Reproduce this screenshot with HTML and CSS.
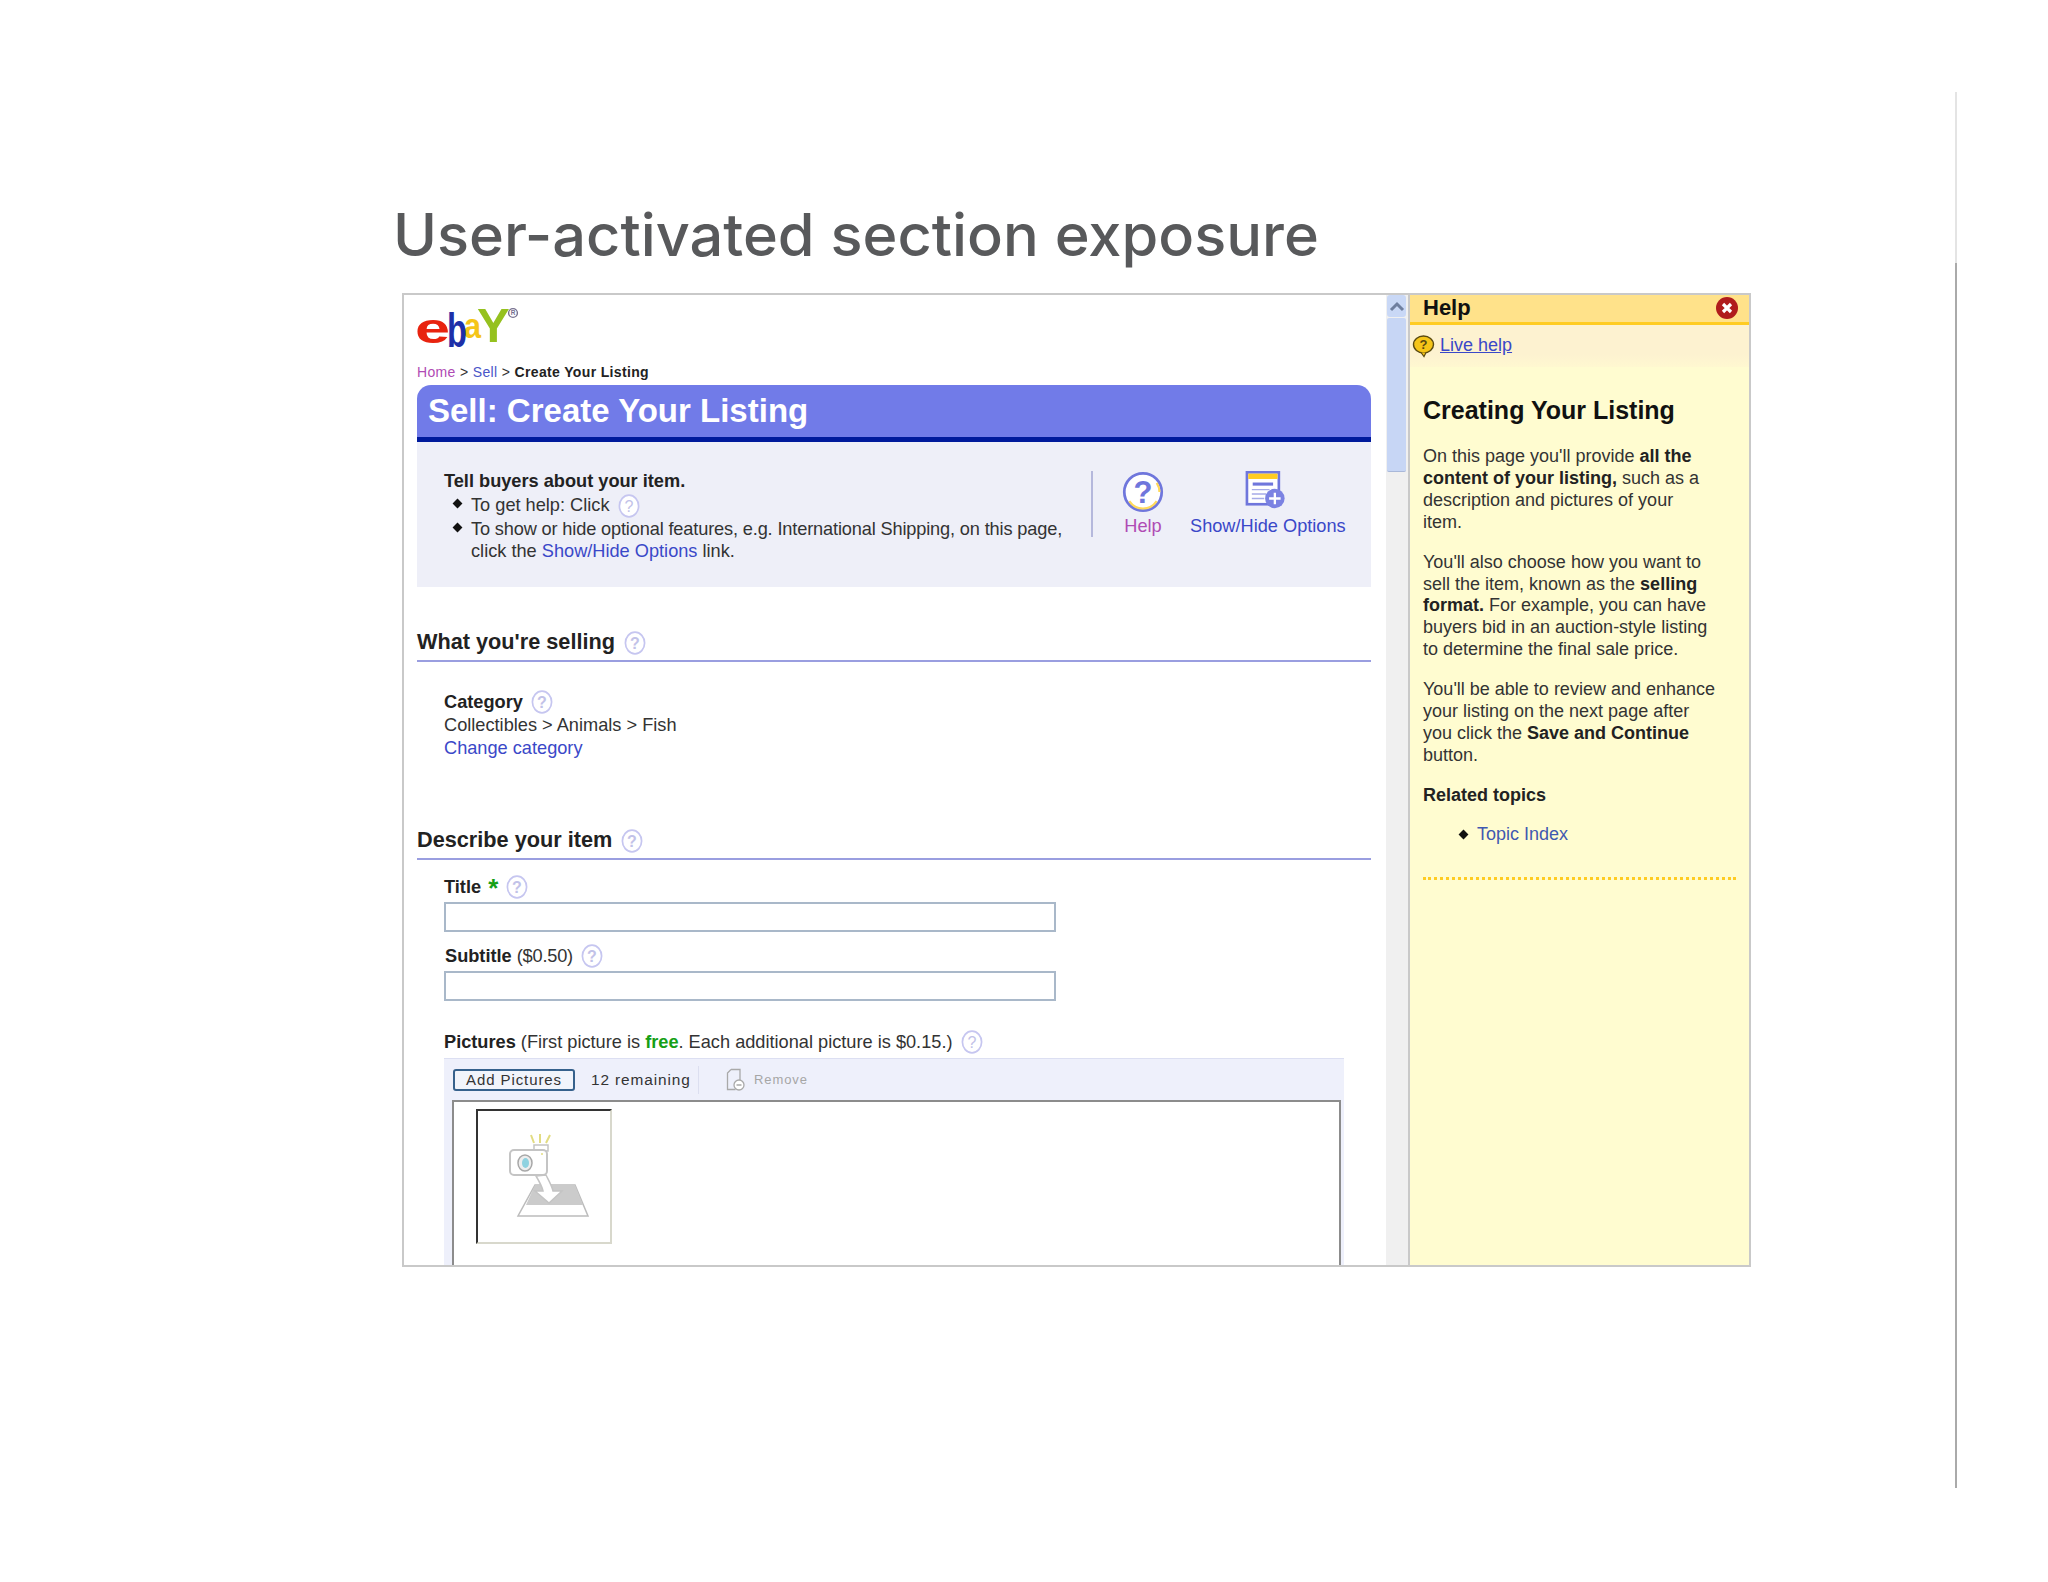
FILE: index.html
```html
<!DOCTYPE html>
<html>

<head>
  <meta charset="utf-8" />
  <title>User-activated section exposure</title>
  <link rel="stylesheet" href="styles.css">
</head>

<body>
  <svg class="defs" width="0" height="0">
    <symbol id="q" viewBox="0 0 22 24">
      <ellipse cx="11" cy="12" rx="9.6" ry="10.8" fill="#fff" stroke="#c6c6f0" stroke-width="1.7" />
      <text x="11" y="18" text-anchor="middle" font-family="Liberation Sans" font-size="16" fill="#c2c2e8">?</text>
    </symbol>
  </svg>
  <div class="slide">
    <h1 class="slide-title">User-activated section exposure</h1>
    <div class="shot">
      <div class="page">
        <div class="content">
          <svg class="logo" width="112" height="50" viewBox="0 0 112 50">
            <text transform="translate(-2 38) scale(1.5 1)" class="logo-e">e</text>
            <text transform="translate(60 37)" class="logo-y">Y</text>
            <text transform="translate(47 33) scale(.85 1)" class="logo-a">a</text>
            <text transform="translate(30 42) scale(.68 1)" class="logo-b">b</text>
            <circle cx="96" cy="8" r="4.4" fill="none" stroke="#76708f" stroke-width="1.4" />
            <text x="96" y="10.3" text-anchor="middle" class="logo-r">R</text>
          </svg>
          <div class="crumbs"><a class="visited">Home</a> &gt; <a>Sell</a> &gt; <b>Create Your Listing</b></div>
          <div class="banner">Sell: Create Your Listing</div>
          <div class="intro">
            <div class="intro-text">
              <b>Tell buyers about your item.</b>
              <ul class="intro-list">
                <li>To get help: Click <svg class="q q-inline"><use href="#q" /></svg></li>
                <li><span class="tight">To show or hide optional features, e.g. International Shipping, on this page,</span><br>click the <a>Show/Hide Options</a> link.</li>
              </ul>
            </div>
            <div class="intro-actions">
              <div class="action action-help">
                <svg width="46" height="46" viewBox="0 0 46 46">
                  <circle cx="23" cy="23" r="20.5" fill="#fff" stroke="#6f76dc" stroke-width="3" />
                  <path d="M8 33a18 18 0 0 0 30 0M38 13a18 18 0 0 1 3 10" fill="none" stroke="#ffd95a" stroke-width="2.4" />
                  <text x="23" y="35" text-anchor="middle" class="help-mark">?</text>
                </svg>
                <a class="visited">Help</a>
              </div>
              <div class="action action-show">
                <svg width="46" height="44" viewBox="0 0 46 44">
                  <rect x="1.5" y="1.5" width="36" height="36" fill="#fff" stroke="#6f76dc" stroke-width="3" />
                  <rect x="3" y="3" width="33" height="6" fill="#ffcc22" />
                  <rect x="8" y="13" width="23" height="3.5" fill="#6f76dc" />
                  <path d="M7 21h20M7 26h16M7 31h14" stroke="#a6abe8" stroke-width="1.6" />
                  <circle cx="33" cy="31" r="11" fill="#7b82e2" />
                  <path d="M33 24.5v13M26.5 31h13" stroke="#fff" stroke-width="2.6" />
                </svg>
                <a>Show/Hide Options</a>
              </div>
            </div>
          </div>

          <h2 class="section-head first">What you're selling <svg class="q"><use href="#q" /></svg></h2>
          <div class="section-body category">
            <div class="label">Category <svg class="q"><use href="#q" /></svg></div>
            <div>Collectibles &gt; Animals &gt; Fish</div>
            <a class="change">Change category</a>
          </div>

          <h2 class="section-head second">Describe your item <svg class="q"><use href="#q" /></svg></h2>
          <div class="section-body">
            <div class="label field-label">Title <span class="star">*</span> <svg class="q"><use href="#q" /></svg></div>
            <div class="input"></div>
            <div class="label field-label sub"><span class="nudge">Subtitle</span> <span class="normal">($0.50)</span> <svg class="q"><use href="#q" /></svg></div>
            <div class="input"></div>
            <div class="pics-label"><span class="label">Pictures</span> (First picture is <span class="free">free</span>. Each additional picture is $0.15.) <svg class="q"><use href="#q" /></svg></div>
            <div class="uploader">
              <div class="toolbar">
                <span class="add-btn">Add Pictures</span>
                <span class="remaining">12 remaining</span>
                <svg class="remove-icon" width="20" height="24" viewBox="0 0 20 24">
                  <path d="M5 1.5h9v11M5 1.5L1.5 5v16.5h8" fill="none" stroke="#a9a9a9" stroke-width="1.3" />
                  <circle cx="13" cy="17" r="5" fill="#fff" stroke="#a9a9a9" stroke-width="1.3" />
                  <path d="M10.5 17h5" stroke="#a9a9a9" stroke-width="1.5" />
                </svg>
                <span class="remove">Remove</span>
              </div>
              <div class="dropzone">
                <div class="thumb">
                  <svg width="90" height="92" viewBox="0 0 90 92">
                    <path d="M25 5l3 8M34 4v9M44 5l-4 8" stroke="#e2dc82" stroke-width="2" />
                    <rect x="28" y="15" width="14" height="6" fill="#fff" stroke="#c4c4c4" stroke-width="1.5" />
                    <rect x="4" y="20" width="37" height="25" rx="4" fill="#fff" stroke="#c4c4c4" stroke-width="2" />
                    <ellipse cx="19" cy="33" rx="7" ry="8" fill="#eee" stroke="#a8a8a8" stroke-width="1.5" />
                    <ellipse cx="19.5" cy="33" rx="3.5" ry="5" fill="#8fd2e0" />
                    <circle cx="36" cy="24" r="1" fill="#e2dc82" />
                    <path d="M29 55h40l13 31H12z" fill="#fff" stroke="#bcbcbc" stroke-width="1.5" />
                    <path d="M29 55h40l8 20H20z" fill="#cbcbcb" />
                    <path d="M30 46l10-1c3 6 6 11 7 16h9L43 73 29 61h8c-1-5-4-10-7-15z" fill="#fff" stroke="#c4c4c4" stroke-width="1.5" />
                  </svg>
                </div>
              </div>
            </div>
          </div>
        </div>
        <div class="scrollbar">
          <div class="scroll-btn">
            <svg width="16" height="12" viewBox="0 0 16 12"><path d="M2 10l6-6 6 6" fill="none" stroke="#6f7f9f" stroke-width="3" /></svg>
          </div>
          <div class="scroll-thumb"></div>
        </div>
      </div>

      <div class="help">
        <div class="help-head">
          <span>Help</span>
          <svg width="24" height="24" viewBox="0 0 24 24">
            <circle cx="12" cy="12" r="11" fill="#b01c1c" />
            <path d="M8 8l8 8M16 8l-8 8" stroke="#fff" stroke-width="3.2" />
          </svg>
        </div>
        <div class="help-live">
          <svg width="23" height="24" viewBox="0 0 23 24">
            <ellipse cx="11.5" cy="10.5" rx="10" ry="8.5" fill="#f5c518" stroke="#5a4a10" stroke-width="1.4" />
            <path d="M9 18.5l3 4 2-4" fill="#f5c518" stroke="#5a4a10" stroke-width="1.2" />
            <text x="11.5" y="15" text-anchor="middle" class="live-mark">?</text>
          </svg>
          <a>Live help</a>
        </div>
        <div class="help-body">
          <h3 class="help-title">Creating Your Listing</h3>
          <p>On this page you'll provide <b>all the<br>content of your listing,</b> such as a<br>description and pictures of your<br>item.</p>
          <p>You'll also choose how you want to<br>sell the item, known as the <b>selling<br>format.</b> For example, you can have<br>buyers bid in an auction-style listing<br>to determine the final sale price.</p>
          <p>You'll be able to review and enhance<br>your listing on the next page after<br>you click the <b>Save and Continue</b><br>button.</p>
          <p class="related"><b>Related topics</b></p>
          <ul class="topics">
            <li><a>Topic Index</a></li>
          </ul>
          <div class="dots"></div>
        </div>
      </div>
    </div>
  </div>
  <div class="edge"></div>
</body>

</html>
```

FILE: styles.css
```css
html,
body {
  margin: 0;
  padding: 0;
}

body {
  display: flex;
  height: 1582px;
  overflow: hidden;
  background: #fff;
  color: #333;
  font-family: "Liberation Sans", Arial, sans-serif;
  font-size: 18.2px;
  line-height: 22px;
}

a {
  color: #3a48c8;
}

.defs {
  display: block;
  width: 0;
  height: 0;
}

.slide {
  width: 1955px;
  padding: 196px 0 0 393px;
  box-sizing: border-box;
}

.edge {
  width: 2px;
  height: 1396px;
  margin-top: 92px;
  background: linear-gradient(#e4e4e4 0, #e4e4e4 171px, #aaa 171px);
}

.slide-title {
  margin: 0 0 20px;
  height: 77px;
  font-family: "Inter", sans-serif;
  font-size: 59.5px;
  font-weight: 500;
  line-height: 77px;
  color: #58595b;
  white-space: nowrap;
}

.shot {
  display: flex;
  width: 1349px;
  height: 974px;
  margin-left: 9px;
  box-sizing: border-box;
  border: 2px solid #c9c9c9;
  overflow: hidden;
}

.page {
  display: flex;
  width: 1004px;
  flex-shrink: 0;
  background: #fff;
}

/* left side */
.content {
  width: 982px;
  padding: 10px 0 0 13px;
  box-sizing: border-box;
  overflow: hidden;
}

.logo {
  display: block;
  height: 50px;
}

.logo text {
  font-family: "Liberation Sans", sans-serif;
  font-weight: 700;
}

.logo-e {
  font-size: 42px;
  fill: #e8230f;
}

.logo-b {
  font-size: 48px;
  fill: #1d2fa8;
}

.logo-a {
  font-size: 36px;
  fill: #f5c518;
}

.logo-y {
  font-size: 49px;
  fill: #95c11f;
}

.logo-r {
  font-size: 6.5px;
  fill: #76708f;
}

.crumbs {
  margin-top: 8px;
  height: 18px;
  font-size: 14px;
  line-height: 18px;
  letter-spacing: 0.35px;
}

.crumbs a {
  color: #4a55c8;
}

.crumbs b {
  color: #222;
}

a.visited,
.crumbs a.visited {
  color: #b04bb4;
}

.banner {
  width: 954px;
  height: 57px;
  margin-top: 4px;
  padding-left: 11px;
  box-sizing: border-box;
  border-bottom: 5px solid #001a9c;
  border-radius: 14px 14px 0 0;
  background: #717be8;
  color: #fff;
  font-size: 33px;
  font-weight: 700;
  line-height: 52px;
}

.intro {
  display: flex;
  width: 954px;
  height: 145px;
  padding: 28px 0 0 27px;
  box-sizing: border-box;
  background: #eeeff8;
}

.intro-text {
  width: 647px;
}

.intro-text b {
  color: #222;
  display: block;
  line-height: 22px;
}

.intro-list {
  margin: 2px 0 0;
  padding: 0 0 0 27px;
  list-style: none;
  line-height: 22.2px;
}

.intro-list li {
  position: relative;
}

.tight {
  letter-spacing: -0.15px;
}

.intro-list li::before,
.topics li::before {
  content: "";
  position: absolute;
  left: -17px;
  top: 6px;
  width: 7px;
  height: 7px;
  background: #111;
  transform: rotate(45deg);
}

.intro-actions {
  display: flex;
  height: 66px;
  margin-top: 1px;
  padding-left: 27px;
  border-left: 2px solid #b5b8dc;
  gap: 24px;
}

.action {
  display: flex;
  flex-direction: column;
  align-items: center;
}

.action svg {
  display: block;
}

.action a {
  margin-top: 2px;
  white-space: nowrap;
}

.action-show svg {
  margin-left: -3px;
  margin-bottom: 3px;
}

.help-mark {
  font-family: "Liberation Sans", sans-serif;
  font-size: 34px;
  font-weight: 700;
  fill: #6f76dc;
}

.q {
  display: inline-block;
  width: 22px;
  height: 24px;
  vertical-align: -6px;
  margin-left: 3px;
}

.q-inline {
  vertical-align: -7px;
}

.section-head {
  width: 954px;
  height: 40px;
  margin: 0;
  box-sizing: border-box;
  border-bottom: 2px solid #9a9ee0;
  color: #222;
  font-size: 21.7px;
  font-weight: 700;
  line-height: 39px;
}

.section-head.first {
  margin-top: 35px;
}

.section-head.second {
  margin-top: 61px;
}

.section-body {
  padding-left: 27px;
}

.category {
  padding-top: 28px;
}

.change {
  display: block;
  margin-top: 1px;
}

.label {
  color: #222;
  font-weight: 700;
}

.field-label {
  height: 22px;
}

.section-body .field-label:first-child {
  margin-top: 15px;
}

.field-label.sub {
  margin-top: 12px;
}

.nudge {
  margin-left: 1px;
}

.normal {
  font-weight: 400;
  color: #333;
  letter-spacing: -0.2px;
}

.star {
  margin-left: 2px;
  color: #16a016;
  font-size: 26px;
  line-height: 0;
  vertical-align: -4px;
}

.input {
  width: 612px;
  height: 30px;
  margin-top: 5px;
  box-sizing: border-box;
  border: 2px solid #a9b8c9;
  background: #fff;
}

.pics-label {
  height: 22px;
  margin-top: 29px;
}

.free {
  color: #16a016;
  font-weight: 700;
}

.uploader {
  width: 900px;
  height: 220px;
  margin-top: 6px;
  padding: 10px 3px 0 9px;
  box-sizing: border-box;
  background: #eef0fb;
  border-top: 1px solid #dcdff2;
}

.toolbar {
  display: flex;
  align-items: center;
  height: 22px;
  margin-bottom: 9px;
  font-size: 15.4px;
  letter-spacing: 0.9px;
}

.add-btn {
  width: 122px;
  height: 22px;
  box-sizing: border-box;
  border: 2px solid #36618c;
  border-radius: 3px;
  background: #f1f4fb;
  color: #333;
  font-size: 15px;
  line-height: 18px;
  text-align: center;
}

.remaining {
  width: 107px;
  height: 28px;
  margin-left: 16px;
  border-right: 1px solid #dcdff0;
  line-height: 28px;
  white-space: nowrap;
}

.remove-icon {
  margin-left: 27px;
}

.remove {
  margin-left: 8px;
  color: #a6a6a6;
  font-size: 13px;
}

.dropzone {
  width: 889px;
  height: 170px;
  margin-left: -1px;
  padding: 7px 0 0 22px;
  box-sizing: border-box;
  border: 2px solid #8c8c8c;
  border-bottom: 0;
  background: #fff;
}

.thumb {
  width: 136px;
  height: 135px;
  padding: 19px 0 0 28px;
  box-sizing: border-box;
  border: 2px solid #d8d8cc;
  border-top-color: #333;
  border-left-color: #333;
  background: #fff;
}

.thumb svg {
  display: block;
}

/* scrollbar */
.scrollbar {
  width: 22px;
  background: #f0f0f0;
  padding: 0 2px 0 1px;
  box-sizing: border-box;
}

.scroll-btn {
  display: flex;
  align-items: center;
  justify-content: center;
  height: 22px;
  border-radius: 3px;
  background: #c9d8f6;
}

.scroll-btn svg {
  display: block;
}

.scroll-thumb {
  height: 153px;
  margin-top: 1px;
  border-radius: 2px;
  background: #c7d6f5;
  border-bottom: 1px solid #a9b8d9;
}

/* help side */
.help {
  flex: 1;
  min-width: 0;
  border-left: 2px solid #c9c9c9;
  background: #fffcd0;
  color: #333;
  font-size: 18px;
  line-height: 21.9px;
}

.help-head {
  display: flex;
  align-items: center;
  justify-content: space-between;
  height: 30px;
  padding: 0 10px 2px 13px;
  box-sizing: border-box;
  border-bottom: 3px solid #ffcc22;
  background: #ffe28a;
  color: #111;
  font-size: 22px;
  font-weight: 700;
}

.help-live {
  display: flex;
  align-items: center;
  height: 42px;
  padding: 0 0 1px 2px;
  box-sizing: border-box;
  gap: 5px;
  background: linear-gradient(#fdf2d0, #fdf2d0 70%, #fff8d0);
}

.help-live a {
  text-decoration: underline;
}

.live-mark {
  font-family: "Liberation Sans", sans-serif;
  font-size: 13px;
  font-weight: 700;
  fill: #5a4a10;
}

.help-body {
  padding: 28px 0 0 13px;
}

.help-title {
  margin: 0 0 21px;
  color: #111;
  font-size: 25px;
  font-weight: 700;
  line-height: 30px;
}

.help-body p {
  margin: 0 0 18px;
  white-space: nowrap;
}

.help-body p.related {
  margin-bottom: 0;
}

.help-body b {
  color: #222;
}

.topics {
  margin: 0;
  padding: 0 0 0 54px;
  list-style: none;
}

.topics li {
  position: relative;
  margin-top: 17px;
}

.topics li::before {
  left: -17px;
  top: 7px;
}

.topics a {
  color: #3f58b0;
}

.dots {
  width: 313px;
  height: 0;
  margin-top: 31px;
  border-top: 3px dotted #ffcc22;
}
```
